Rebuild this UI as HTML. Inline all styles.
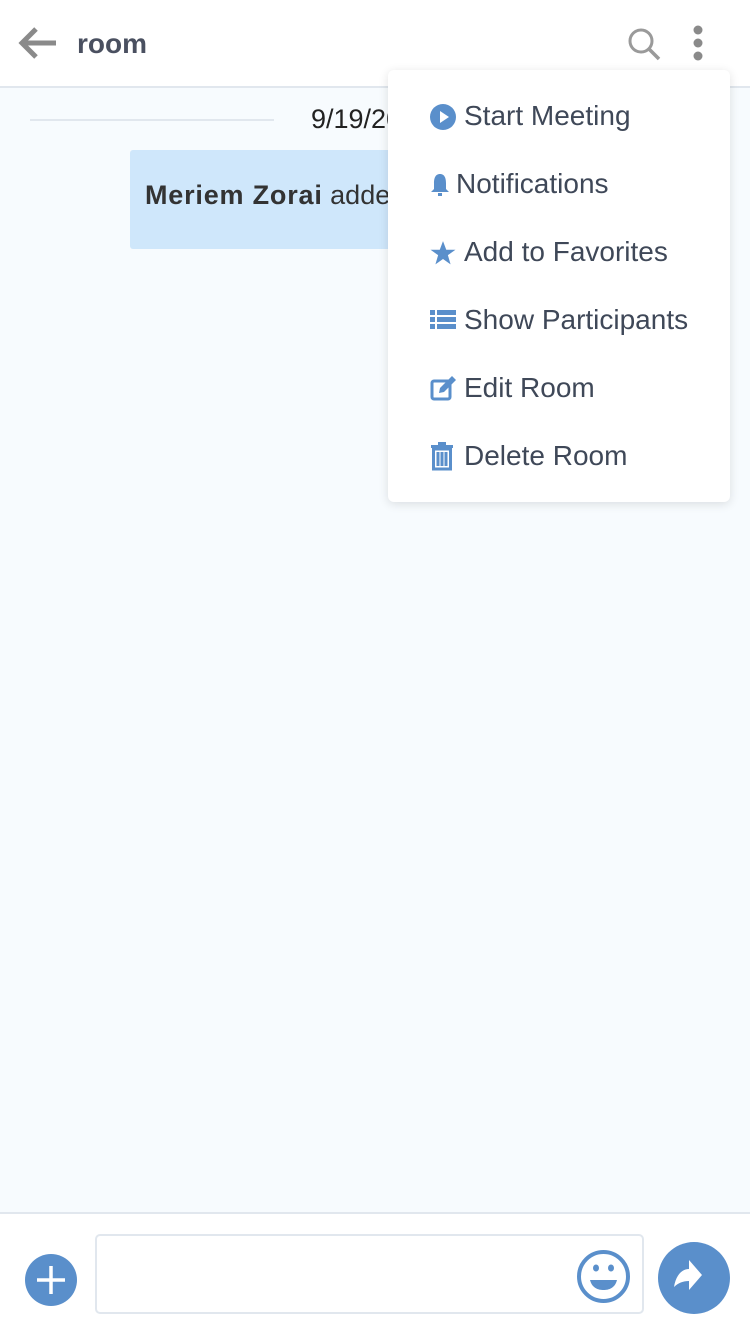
<!DOCTYPE html>
<html><head><meta charset="utf-8"><style>
*{margin:0;padding:0;box-sizing:border-box}
body{width:750px;height:1334px;background:#f7fbfe;font-family:"Liberation Sans",sans-serif;position:relative;overflow:hidden}
.hdr{position:absolute;left:0;top:0;width:750px;height:88px;background:#fff;border-bottom:2px solid #e1e7ee}
.title{position:absolute;left:77px;top:28px;font-size:28px;font-weight:bold;color:#4a5060}
.dl{position:absolute;left:30px;top:119px;width:244px;height:2px;background:#e1e7ee}
.date{position:absolute;left:311px;top:104px;font-size:27px;color:#222}
.bub{position:absolute;left:130px;top:150px;width:592px;height:99px;background:#cfe7fb;border-radius:3px}
.bub span{position:absolute;left:15px;top:30px;font-size:27px;color:#333;white-space:nowrap}
.bub b{letter-spacing:0.8px}
.menu{position:absolute;left:388px;top:70px;width:342px;height:432px;background:#fff;border-radius:6px;box-shadow:0 2px 10px rgba(0,0,0,.12)}
.it{position:absolute;left:76px;font-size:28px;color:#3f4858;white-space:nowrap}
.ic{position:absolute;left:42px}
.ftr{position:absolute;left:0;top:1212px;width:750px;height:122px;background:#fff;border-top:2px solid #e1e7ee}
.inp{position:absolute;left:95px;top:1234px;width:549px;height:80px;border:2px solid #e1e7ee;border-radius:5px;background:#fff}
</style></head><body>
<div class="hdr">
<svg style="position:absolute;left:18px;top:26px" width="40" height="34" viewBox="0 0 40 34"><path d="M18 3 L4 17 L18 31 M4 17 H38" stroke="#8a8a8a" stroke-width="5" fill="none"/></svg>
<div class="title">room</div>
<svg style="position:absolute;left:626px;top:26px" width="36" height="36" viewBox="0 0 36 36"><circle cx="15" cy="15" r="11" stroke="#9a9a9a" stroke-width="3" fill="none"/><path d="M23 23 L33 33" stroke="#9a9a9a" stroke-width="3.5"/></svg>
<svg style="position:absolute;left:690px;top:24px" width="16" height="38"><circle cx="8" cy="6" r="4.5" fill="#8a8a8a"/><circle cx="8" cy="19" r="4.5" fill="#8a8a8a"/><circle cx="8" cy="32" r="4.5" fill="#8a8a8a"/></svg>
</div>
<div class="dl"></div>
<div class="date">9/19/2019</div>
<div class="bub"><span><b>Meriem Zorai</b> added</span></div>
<div class="menu">
<svg class="ic" style="top:34px" width="26" height="26"><circle cx="13" cy="13" r="13" fill="#5a8fcb"/><path d="M10 7 L19 13 L10 19Z" fill="#fff"/></svg>
<div class="it" style="top:30px">Start Meeting</div>
<svg class="ic" style="top:103px" width="20" height="24" viewBox="0 0 20 24"><path d="M10 1 C5 1 4 6 4 10 L4 16 L1 19 L19 19 L16 16 L16 10 C16 6 15 1 10 1Z M8 20 H12 V23 H8Z" fill="#5a8fcb"/></svg>
<div class="it" style="left:68px;top:98px">Notifications</div>
<svg class="ic" style="top:170px" width="26" height="26" viewBox="0 0 24 24"><path d="M12 1 L15 9 L23.5 9 L16.5 14 L19 22.5 L12 17.5 L5 22.5 L7.5 14 L0.5 9 L9 9Z" fill="#5a8fcb"/></svg>
<div class="it" style="top:166px">Add to Favorites</div>
<svg class="ic" style="top:240px" width="26" height="20"><rect x="0" y="0" width="5" height="5" fill="#5a8fcb"/><rect x="7" y="0" width="19" height="5" fill="#5a8fcb"/><rect x="0" y="7" width="5" height="5" fill="#5a8fcb"/><rect x="7" y="7" width="19" height="5" fill="#5a8fcb"/><rect x="0" y="14" width="5" height="5" fill="#5a8fcb"/><rect x="7" y="14" width="19" height="5" fill="#5a8fcb"/></svg>
<div class="it" style="top:234px">Show Participants</div>
<svg class="ic" style="top:304px" width="27" height="28" viewBox="0 0 27 28"><rect x="2" y="7" width="18" height="18" rx="2" stroke="#5a8fcb" stroke-width="3" fill="none"/><path d="M9 19 L10 14 L22 2 L26 6 L14 18Z" fill="#5a8fcb"/></svg>
<div class="it" style="top:302px">Edit Room</div>
<svg class="ic" style="top:371px" width="24" height="30" viewBox="0 0 24 30"><rect x="1" y="4" width="22" height="3" fill="#5a8fcb"/><rect x="8" y="1" width="8" height="4" fill="#5a8fcb"/><path d="M3.5 8 H20.5 V28 H3.5Z M8 11 V25 M12 11 V25 M16 11 V25" fill="none" stroke="#5a8fcb" stroke-width="3"/></svg>
<div class="it" style="top:370px">Delete Room</div>
</div>
<div class="ftr"></div>
<svg style="position:absolute;left:25px;top:1254px" width="52" height="52"><circle cx="26" cy="26" r="26" fill="#5a8fcb"/><path d="M26 12 V40 M12 26 H40" stroke="#fff" stroke-width="3.5"/></svg>
<div class="inp"></div>
<svg style="position:absolute;left:576px;top:1249px" width="55" height="55"><circle cx="27.5" cy="27.5" r="24.5" stroke="#5a8fcb" stroke-width="4" fill="#fff"/><ellipse cx="20" cy="19" rx="3" ry="3.5" fill="#5a8fcb"/><ellipse cx="35" cy="19" rx="3" ry="3.5" fill="#5a8fcb"/><path d="M14 31 H41 C39 39 33 41 27.5 41 C22 41 16 39 14 31Z" fill="#5a8fcb"/></svg>
<svg style="position:absolute;left:658px;top:1242px" width="72" height="72"><circle cx="36" cy="36" r="36" fill="#5a8fcb"/><path d="M16 45 C18 33 24 27 31 27 V18 L44 33 L31 48 V39 C25 39 20 41 16 45Z" fill="#fff"/></svg>
</body></html>
